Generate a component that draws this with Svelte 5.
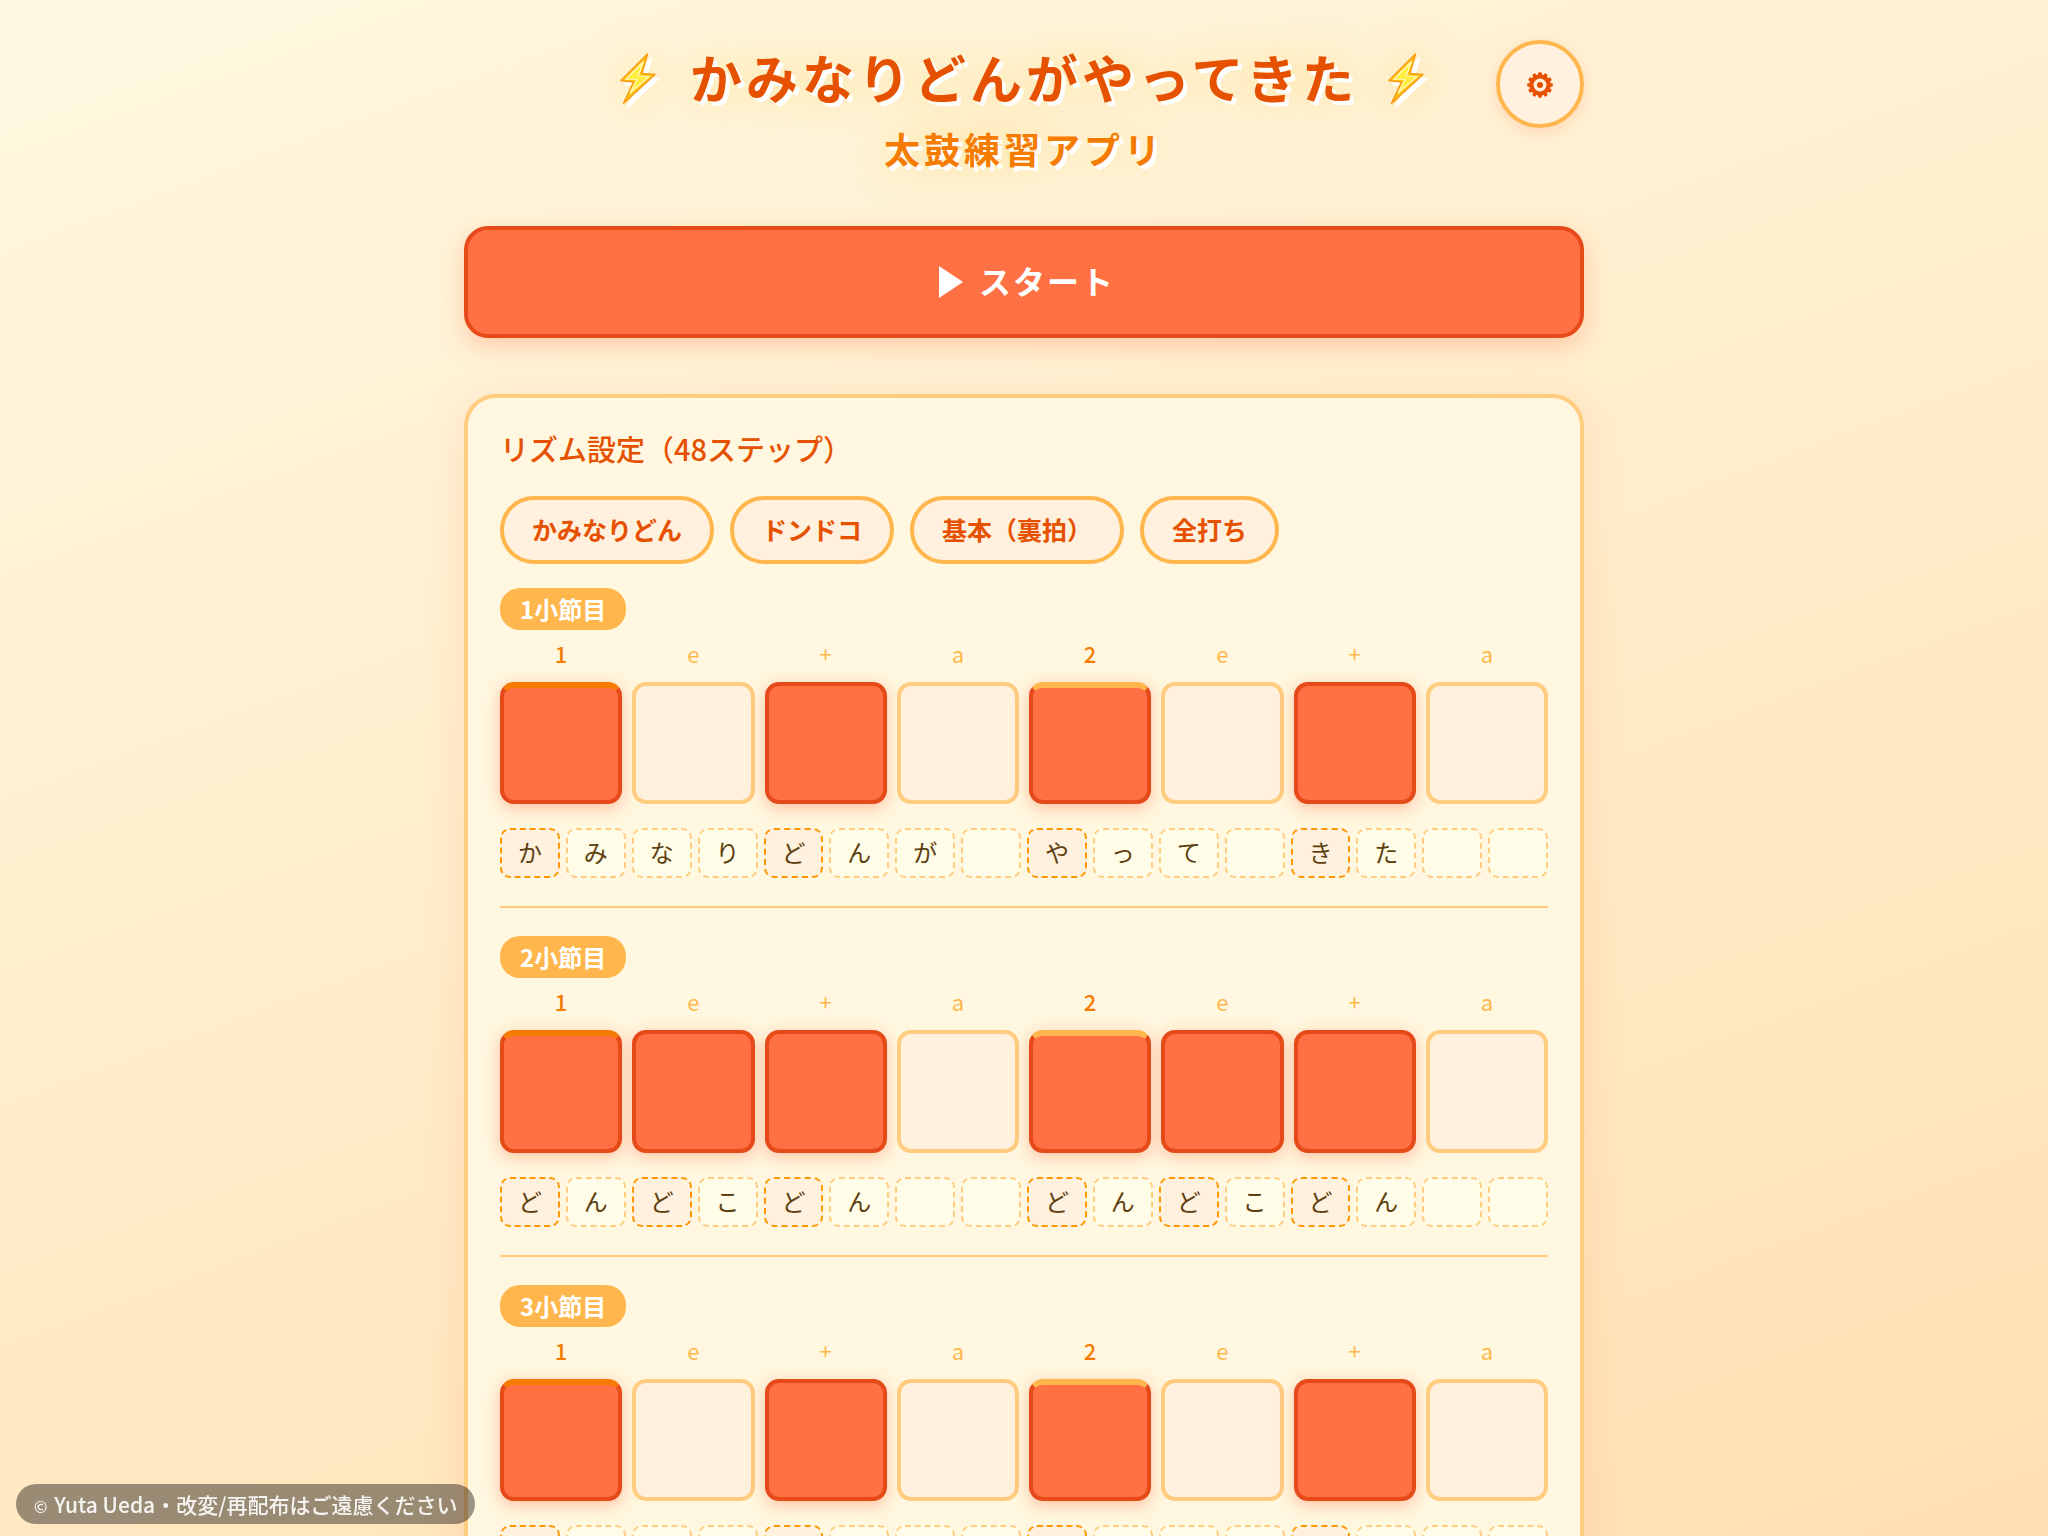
<script>
  let playing = $state(false);

  const beats = ['1', 'e', '+', 'a', '2', 'e', '+', 'a'];
  const presets = ['かみなりどん', 'ドンドコ', '基本（裏拍）', '全打ち'];

  // steps: x = hit, - = rest. accents are indexes into the lyric cells
  let measures = $state([
    {
      steps: [...'x-x-x-x-'],
      lyrics: ['か', 'み', 'な', 'り', 'ど', 'ん', 'が', '', 'や', 'っ', 'て', '', 'き', 'た', '', ''],
      accents: [0, 4, 8, 12]
    },
    {
      steps: [...'xxx-xxx-'],
      lyrics: ['ど', 'ん', 'ど', 'こ', 'ど', 'ん', '', '', 'ど', 'ん', 'ど', 'こ', 'ど', 'ん', '', ''],
      accents: [0, 2, 4, 8, 10, 12]
    },
    {
      steps: [...'x-x-x-x-'],
      lyrics: Array(16).fill(''),
      accents: [0, 4, 8, 12]
    }
  ]);

  function toggleStep(m, s) {
    measures[m].steps[s] = measures[m].steps[s] === 'x' ? '-' : 'x';
  }
</script>

{#snippet bolt()}
  <svg class="bolt" viewBox="0 0 36 52" aria-hidden="true">
    <path d="M27.500 1 L1 27.500 L13.500 29 L3.500 50.500 L35 21.500 L22 20.500 Z" fill="#ffc61a" stroke="#fb9a0c" stroke-width="1.500" stroke-linejoin="round" />
    <path d="M23.500 8.500 L6 26 L17 26.500 L10 40 L29 23.500 L18 23 Z" fill="#ffec3d" stroke="#fffbc4" stroke-width="1.200" />
  </svg>
{/snippet}

<div class="container">
  <header>
    <div class="titles">
      <h1>{@render bolt()}<span>かみなりどんがやってきた</span>{@render bolt()}</h1>
      <p class="subtitle">太鼓練習アプリ</p>
    </div>
    <button class="settings" aria-label="設定">
      <svg viewBox="-13 -13 26 26" aria-hidden="true">
        {#each Array(12) as _, i}
          <rect x="-1.800" y="-12.800" width="3.600" height="5" rx="1" transform="rotate({i * 30})" />
        {/each}
        <circle r="8.600" fill="none" stroke="currentColor" stroke-width="4.200" />
        <circle r="3" />
      </svg>
    </button>
  </header>

  <button class="start" onclick={() => (playing = !playing)}>
    <svg viewBox="0 0 24 32" aria-hidden="true"><path d="M0 0 L24 16 L0 32 Z" /></svg>
    <span>スタート</span>
  </button>

  <section class="card">
    <h2>リズム設定（48ステップ）</h2>

    <div class="presets">
      {#each presets as preset}
        <button class="preset">{preset}</button>
      {/each}
    </div>

    {#each measures as measure, m}
      <div class="measure">
        <span class="measure-label">{m + 1}小節目</span>
        <div class="beats">
          {#each beats as beat, b}
            <span class:strong={b % 4 === 0}>{beat}</span>
          {/each}
        </div>
        <div class="steps">
          {#each measure.steps as step, s}
            <button
              class="step"
              class:on={step === 'x'}
              class:head={s === 0}
              class:half={s === 4}
              aria-label={beats[s]}
              aria-pressed={step === 'x'}
              onclick={() => toggleStep(m, s)}
            ></button>
          {/each}
        </div>
        <div class="lyrics">
          {#each measure.lyrics as lyric, l}
            <span class="lyric" class:accent={measure.accents.includes(l)}>{lyric}</span>
          {/each}
        </div>
      </div>
    {/each}
  </section>
</div>

<footer><small>©</small> Yuta Ueda・改変/再配布はご遠慮ください</footer>

<style>
  :global(body) {
    background: linear-gradient(160deg, #fff8e1 0%, #ffe0b2 100%) fixed;
    font-family: "Noto Sans CJK JP", sans-serif;
    color: #5d4010;
  }

  .container {
    box-sizing: border-box;
    max-width: 1200px;
    margin: 0 auto;
    padding: 40px;
  }

  button {
    font-family: inherit;
    cursor: pointer;
  }

  header {
    display: grid;
    grid-template-columns: 88px 1fr 88px;
    align-items: start;
    margin-bottom: 52px;
  }

  .titles {
    grid-column: 2;
    text-align: center;
  }

  h1,
  .subtitle {
    margin: 0;
    letter-spacing: 4px;
    text-shadow: 4px 4px 0 #fff, 0 0 40px rgba(255, 193, 7, 0.4);
  }

  h1 {
    display: flex;
    justify-content: center;
    align-items: center;
    gap: 30px;
    font-size: 52px;
    line-height: 74px;
    font-weight: 700;
    color: #e65100;
  }

  .subtitle {
    margin-top: 8px;
    font-size: 36px;
    line-height: 52px;
    font-weight: 700;
    color: #f57c00;
  }

  .bolt {
    width: 36px;
    height: 52px;
    margin: 4px 4px 0 0;
    filter: drop-shadow(4px 4px 0 #fff) drop-shadow(0 0 20px rgba(255, 193, 7, 0.3));
  }

  .settings {
    display: flex;
    align-items: center;
    justify-content: center;
    width: 88px;
    height: 88px;
    padding: 2px 0 0;
    border: 4px solid #ffb74d;
    border-radius: 50%;
    background: #fff1de;
    color: #e65100;
    box-shadow: 0 4px 16px rgba(255, 112, 67, 0.2);
  }

  .settings svg {
    width: 26px;
    height: 26px;
    fill: currentColor;
  }

  .start {
    display: flex;
    align-items: center;
    justify-content: center;
    gap: 16px;
    width: 100%;
    height: 112px;
    padding: 0 0 0 6px;
    margin-bottom: 56px;
    border: 4px solid #e64a19;
    border-radius: 24px;
    background: #ff7043;
    color: #fff;
    font-size: 32px;
    line-height: 44px;
    font-weight: 700;
    letter-spacing: 2px;
    box-shadow: 0 8px 24px rgba(255, 112, 67, 0.3);
  }

  .start span {
    padding-bottom: 4px;
  }

  .start svg {
    width: 24px;
    height: 32px;
    fill: #fff;
  }

  .card {
    padding: 30px 32px 32px;
    border: 4px solid #ffcc80;
    border-radius: 32px;
    background: #fff7df;
    box-shadow: 0 8px 40px rgba(255, 112, 67, 0.15);
  }

  h2 {
    margin: 0 0 28px;
    font-size: 29px;
    line-height: 40px;
    font-weight: 500;
    color: #e65100;
  }

  .presets {
    display: flex;
    flex-wrap: wrap;
    gap: 16px;
    margin-bottom: 24px;
  }

  .preset {
    height: 68px;
    padding: 0 28px 2px;
    border: 4px solid #ffb74d;
    border-radius: 34px;
    background: #fff1de;
    color: #e65100;
    font-size: 25px;
    font-weight: 700;
  }

  .measure {
    padding-bottom: 28px;
    margin-bottom: 28px;
    border-bottom: 2px solid #ffcc80;
  }

  .measure:last-child {
    padding-bottom: 0;
    margin-bottom: 0;
    border-bottom: none;
  }

  .measure-label {
    display: block;
    width: fit-content;
    padding: 0 20px;
    border-radius: 20px;
    background: #ffb74d;
    color: #fff;
    font-size: 24px;
    line-height: 42px;
    font-weight: 700;
  }

  .beats,
  .steps {
    display: grid;
    grid-template-columns: repeat(8, 1fr);
    gap: 10px;
  }

  .beats {
    margin: 8px 0 14px;
    color: #ffb74d;
    font-size: 22px;
    line-height: 30px;
    text-align: center;
  }

  .strong {
    color: #f57c00;
    font-weight: 500;
  }

  .step {
    aspect-ratio: 1;
    padding: 0;
    border: 4px solid #ffcc80;
    border-radius: 14px;
    background: #fff1de;
  }

  .step.on {
    border-color: #e64a19;
    background: #ff7043;
    box-shadow: 0 4px 16px rgba(255, 112, 67, 0.4);
  }

  .step.head {
    border-top: 6px solid #f57c00;
  }

  .step.half {
    border-top: 6px solid #ffb74d;
  }

  .lyrics {
    display: grid;
    grid-template-columns: repeat(16, 1fr);
    gap: 6px;
    margin-top: 24px;
  }

  .lyric {
    height: 46px;
    border: 2px dashed #ffcc80;
    border-radius: 10px;
    background: #fffde7;
    font-size: 24px;
    line-height: 44px;
    text-align: center;
  }

  .lyric.accent {
    border-color: #ff9800;
    background: #fff1de;
  }

  footer {
    position: fixed;
    left: 16px;
    bottom: 12px;
    padding: 0 18px;
    border-radius: 20px;
    background: rgba(0, 0, 0, 0.4);
    color: rgba(255, 255, 255, 0.9);
    font-size: 21px;
    line-height: 40px;
    font-weight: 500;
  }

  footer small {
    margin-right: 2px;
    font-size: 16px;
    line-height: 1;
  }
</style>
